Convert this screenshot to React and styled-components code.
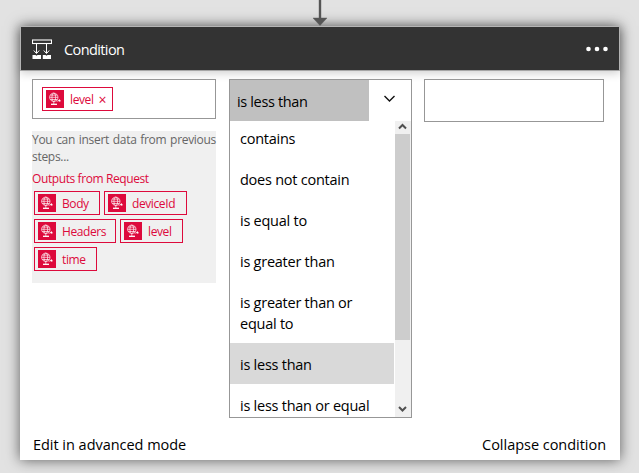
import React from "react";
import styled, { createGlobalStyle } from "styled-components";

const Global = createGlobalStyle`
  * { box-sizing: border-box; }
  body {
    margin: 0;
    background: #e2e2e2;
    font-family: "Open Sans", "Noto Sans", sans-serif;
    font-size: 14.5px;
    line-height: 21px;
    color: #000;
    overflow: hidden;
  }
`;

const Canvas = styled.div`
  width: 639px;
  height: 473px;
  padding-left: 20px;
  background: #e2e2e2;
`;

const Connector = styled.svg`
  display: block;
  position: relative;
  z-index: 1;
  width: 16px;
  height: 26px;
  margin-left: 292px;
`;

const Card = styled.section`
  display: flex;
  flex-direction: column;
  width: 600px;
  height: 434px;
  background: #fff;
  box-shadow: 0 0 13px 0 rgba(0, 0, 0, 0.6);
`;

const Header = styled.header`
  display: flex;
  align-items: center;
  flex: none;
  height: 45px;
  padding: 0 11px;
  background: #333;
  border: 1px solid #b4b4b4;
  border-bottom-color: #a5a5a5;
  color: #fff;
  box-shadow: 0 2px 9px rgba(0, 0, 0, 0.2);
`;

const Title = styled.h1`
  flex: 1;
  margin: 0 0 0 12px;
  padding-top: 2px;
  font-size: 14.5px;
  font-weight: 400;
  letter-spacing: -0.6px;
`;

const Fields = styled.div`
  display: flex;
  align-items: flex-start;
  flex: 1;
  padding: 8px 12px 0;
`;

const Operand = styled.div`
  width: 184px;
  margin-right: 13px;
`;

const Field = styled.div`
  display: flex;
  width: ${(p) => p.$width}px;
  height: ${(p) => p.$height}px;
  padding: 7px 9px;
  border: 1px solid #979797;
  background: #fff;
`;

const Token = styled.span`
  display: flex;
  align-items: center;
  width: ${(p) => p.$width}px;
  height: 24px;
  padding-left: 3px;
  border: 1px solid #dd0a3c;
  color: #dd0a3c;
  font-size: 12px;
  line-height: 18px;
  letter-spacing: -0.4px;
  white-space: nowrap;
`;

const TokenLabel = styled.span`
  padding-top: 2px;
`;

const TokenIcon = styled.svg`
  flex: none;
  width: 18px;
  height: 18px;
  margin-right: 6px;
`;

const Remove = styled.span`
  margin: 2px 0 0 5px;
  font-size: 14px;
`;

const Picker = styled.div`
  height: 152px;
  margin-top: 12px;
  background: #f0f0f0;
  font-size: 12px;
  line-height: 17px;
`;

const Hint = styled.p`
  margin: 0;
  color: #666;
  letter-spacing: -0.3px;
  text-align: justify;
`;

const Source = styled.h2`
  margin: 5px 0 4px;
  color: #dd0a3c;
  font-size: 12px;
  font-weight: 400;
  line-height: 17px;
  letter-spacing: -0.4px;
`;

const Tokens = styled.div`
  display: flex;
  flex-wrap: wrap;
  gap: 4px;
  padding: 0 2px;
`;

const Select = styled.div`
  width: 183px;
  height: 339px;
  margin-right: 12px;
  border: 1px solid #979797;
  background: #fff;
  letter-spacing: -0.25px;
`;

const SelectHead = styled.div`
  display: flex;
  height: 41px;
`;

const SelectValue = styled.div`
  width: 139px;
  padding: 11px 7px 0;
  background: #c0c0c0;
  letter-spacing: -0.35px;
`;

const SelectToggle = styled.div`
  display: flex;
  flex: 1;
  padding: 15px 0 0 15px;
`;

const ListBox = styled.div`
  display: flex;
  height: 296px;
  overflow: hidden;
`;

const Options = styled.ul`
  width: 164px;
  margin: -4px 1px 0 0;
  padding: 0;
  list-style: none;
`;

const Option = styled.li`
  padding: 11px 20px 9px 10px;
  background: ${(p) => (p.$selected ? "#d9d9d9" : "transparent")};
  white-space: ${(p) => (p.$wrap ? "normal" : "nowrap")};
`;

const ScrollBar = styled.div`
  display: flex;
  flex-direction: column;
  width: 16px;
  background: #f0f0f0;
`;

const Thumb = styled.div`
  width: 15px;
  height: 206px;
  background: #cdcdcd;
`;

const ScrollArrow = styled.svg`
  display: block;
  width: 15px;
  height: 13px;
  margin-top: ${(p) => (p.$end ? "auto" : "0")};
  margin-bottom: ${(p) => (p.$end ? "2px" : "0")};
`;

const Footer = styled.footer`
  display: flex;
  justify-content: space-between;
  height: 27px;
  padding: 1px 14px 0 13px;
`;

const Link = styled.span`
  letter-spacing: -0.03px;
`;

function ConditionIcon() {
  return (
    <svg width="20" height="20" viewBox="0 0 20 20" fill="none" stroke="#fff">
      <rect x="0.5" y="1" width="19" height="3.5" strokeWidth="1.1" />
      <path d="M4.500 4.500V14M14.500 4.500V14M1.800 11.500L4.500 14.500L7.200 11.500M11.800 11.500L14.500 14.500L17.200 11.500" strokeWidth="1" />
      <path d="M0.500 16h3l1 .8 1-.8h3.500v4H.5zM10.800 16h2.700l1 .8 1-.8h3.500v4h-8.200z" fill="#fff" stroke="none" />
    </svg>
  );
}

function RequestIcon() {
  return (
    <TokenIcon viewBox="0 0 18 18" fill="none">
      <rect width="18" height="18" fill="#dd0a3c" />
      <g stroke="#fff" strokeWidth="0.75" strokeOpacity="0.9">
        <circle cx="7.800" cy="7.300" r="4.200" />
        <ellipse cx="7.800" cy="7.300" rx="1.900" ry="4.200" />
        <path d="M3.600 7.300h8.400M4.300 5.100h7M4.300 9.500h7M7.800 11.500v2.500" />
        <path d="M10.500 11.200c1.500 0 2.500-.7 3-2M12.300 10.600l2 .3" />
      </g>
      <path d="M5 14.300h6" stroke="#fff" strokeWidth="1.300" />
      <circle cx="13.600" cy="10.700" r="0.900" fill="#fff" />
    </TokenIcon>
  );
}

const outputs = [
  { name: "Body", width: 66 },
  { name: "deviceId", width: 83 },
  { name: "Headers", width: 82 },
  { name: "level", width: 63 },
  { name: "time", width: 63 },
];

const operators = [
  "contains",
  "does not contain",
  "is equal to",
  "is greater than",
  "is greater than or equal to",
  "is less than",
  "is less than or equal",
];

export default function App() {
  return (
    <>
      <Global />
      <Canvas>
        <Connector viewBox="0 0 16 26">
          <path d="M7 0h2v18h6L8 25.500 1 18h6z" fill="#555" stroke="#555" strokeWidth="0.400" />
        </Connector>
        <Card>
          <Header>
            <ConditionIcon />
            <Title>Condition</Title>
            <svg width="22" height="6" viewBox="0 0 22 6" fill="#fff">
              <circle cx="2.500" cy="3" r="2.300" />
              <circle cx="11" cy="3" r="2.300" />
              <circle cx="19.500" cy="3" r="2.300" />
            </svg>
          </Header>
          <Fields>
            <Operand>
              <Field $width={184} $height={40}>
                <Token $width={71}>
                  <RequestIcon />
                  <TokenLabel>level</TokenLabel>
                  <Remove>×</Remove>
                </Token>
              </Field>
              <Picker>
                <Hint>You can insert data from previous steps...</Hint>
                <Source>Outputs from Request</Source>
                <Tokens>
                  {outputs.map((o) => (
                    <Token key={o.name} $width={o.width}>
                      <RequestIcon />
                      <TokenLabel>{o.name}</TokenLabel>
                    </Token>
                  ))}
                </Tokens>
              </Picker>
            </Operand>
            <Select>
              <SelectHead>
                <SelectValue>is less than</SelectValue>
                <SelectToggle>
                  <svg width="11" height="8" viewBox="0 0 11 8" fill="none" stroke="#111" strokeWidth="1.400">
                    <path d="M0.500 1l5 5 5-5" />
                  </svg>
                </SelectToggle>
              </SelectHead>
              <ListBox>
                <Options>
                  {operators.map((o) => (
                    <Option key={o} $selected={o === "is less than"} $wrap={o.startsWith("is greater than or")}>
                      {o}
                    </Option>
                  ))}
                </Options>
                <ScrollBar>
                  <ScrollArrow viewBox="0 0 15 13">
                    <path d="M4 7.500L7.500 4 11 7.500" fill="none" stroke="#505050" strokeWidth="2" />
                  </ScrollArrow>
                  <Thumb />
                  <ScrollArrow $end viewBox="0 0 15 13">
                    <path d="M4 5L7.500 8.500 11 5" fill="none" stroke="#505050" strokeWidth="2" />
                  </ScrollArrow>
                </ScrollBar>
              </ListBox>
            </Select>
            <Field $width={180} $height={43} />
          </Fields>
          <Footer>
            <Link>Edit in advanced mode</Link>
            <Link>Collapse condition</Link>
          </Footer>
        </Card>
      </Canvas>
    </>
  );
}
